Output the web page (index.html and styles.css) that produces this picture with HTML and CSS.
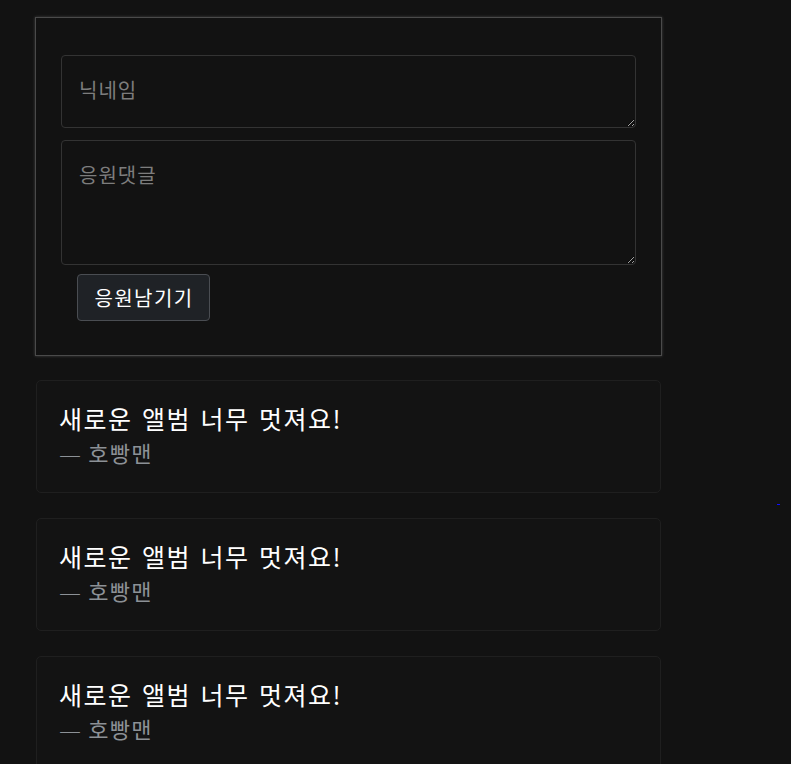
FILE: index.html
```html
<!DOCTYPE html>
<html lang="ko">
<head>
<meta charset="utf-8">
<link rel="stylesheet" href="styles.css">
</head>
<body>
<div class="page">
  <form class="cheer-form">
    <textarea class="field field-name" placeholder="닉네임"></textarea>
    <textarea class="field field-comment" placeholder="응원댓글"></textarea>
    <div class="actions"><button type="button" class="btn">응원남기기</button></div>
  </form>
  <div class="card">
    <p class="quote">새로운 앨범 너무 멋져요!</p>
    <p class="author"><span class="dash">—</span> 호빵맨</p>
  </div>
  <div class="card">
    <p class="quote">새로운 앨범 너무 멋져요!</p>
    <p class="author"><span class="dash">—</span> 호빵맨</p>
  </div>
  <div class="card">
    <p class="quote">새로운 앨범 너무 멋져요!</p>
    <p class="author"><span class="dash">—</span> 호빵맨</p>
  </div>
</div>
<a class="stray-link" href="#"></a>
</body>
</html>
```
FILE: styles.css
```css
html, body {
  margin: 0;
  background: #121212;
  color-scheme: dark;
}
body {
  font-family: "Noto Sans CJK KR", "Noto Sans", sans-serif;
  color: #fff;
  height: 764px;
  overflow: hidden;
  position: relative;
}
.page {
  padding: 17px 0 0 35px;
  width: 627px;
  display: flex;
  flex-direction: column;
}
.cheer-form {
  border: 1px solid #4a4a4a;
  box-shadow: 0 0 3px rgba(255,255,255,0.2);
  padding: 37px 25px 34px 25px;
  display: flex;
  flex-direction: column;
  gap: 12px;
  margin: 0 0 24px 0;
}
.field {
  display: block;
  box-sizing: border-box;
  width: 100%;
  background: #121212;
  border: 1px solid #333;
  border-radius: 4px;
  color: #ddd;
  font-family: inherit;
  font-size: 20px;
  letter-spacing: 1px;
  padding: 22px 17px;
  line-height: 1.2;
  margin: 0;
}
.field::placeholder { color: #7d7d7d; }
.field-name { height: 73px; }
.field-comment { height: 125px; }
.actions {
  padding-left: 16px;
  margin-top: -3px;
}
.btn {
  background: #1f2226;
  border: 1px solid #4a4d52;
  border-radius: 4px;
  color: #fff;
  font-family: inherit;
  font-size: 20px;
  letter-spacing: 1.4px;
  height: 47px;
  width: 133px;
  padding: 0 0 0 1px;
}
.card {
  box-sizing: border-box;
  width: 625px;
  margin-left: 1px;
  height: 113px;
  border: 1px solid #1f1f1f;
  border-radius: 5px;
  background: #131313;
  padding: 19px 22px;
  margin-bottom: 25px;
}
.quote {
  margin: 0;
  font-size: 25px;
  letter-spacing: 1.5px;
  word-spacing: 1px;
  line-height: 36px;
  color: #fff;
}
.author {
  margin: 0;
  font-size: 22px;
  letter-spacing: 1.2px;
  line-height: 32px;
  color: #8c9196;
}
.dash {
  font-family: "DejaVu Sans", sans-serif;
  font-weight: 200;
  letter-spacing: 0;
}
.stray-link {
  position: absolute;
  left: 777px;
  top: 504px;
  width: 3px;
  height: 1px;
  background: #1010ff;
}
```
